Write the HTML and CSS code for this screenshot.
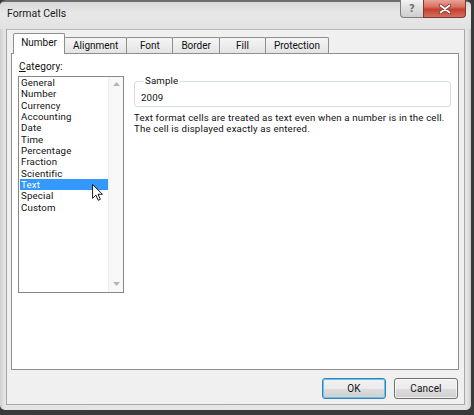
FILE: index.html
```html
<!DOCTYPE html>
<html>
<head>
<meta charset="utf-8">
<title>Format Cells</title>
<link rel="stylesheet" href="styles.css">
</head>
<body>
<div class="window">
  <div class="titlebar">
    <span class="title">Format Cells</span>
    <div class="caption-btns">
      <div class="cap-btn help">?</div>
      <div class="cap-btn close">
        <svg width="14" height="10" viewBox="0 0 14 10"><path d="M2.5 1.5 L11.5 8.5 M11.5 1.5 L2.5 8.5" stroke="#6a2d26" stroke-width="3.4" stroke-linecap="round"/><path d="M2.5 1.5 L11.5 8.5 M11.5 1.5 L2.5 8.5" stroke="#ffffff" stroke-width="1.9" stroke-linecap="round"/></svg>
      </div>
    </div>
  </div>
  <div class="client">
    <div class="tabs">
      <div class="tab selected">Number</div>
      <div class="tab">Alignment</div>
      <div class="tab">Font</div>
      <div class="tab">Border</div>
      <div class="tab">Fill</div>
      <div class="tab">Protection</div>
    </div>
    <div class="panel">
      <div class="col-left">
        <div class="cat-label"><u>C</u>ategory:</div>
        <div class="listbox">
          <ul class="items">
            <li>General</li>
            <li>Number</li>
            <li>Currency</li>
            <li>Accounting</li>
            <li>Date</li>
            <li>Time</li>
            <li>Percentage</li>
            <li>Fraction</li>
            <li>Scientific</li>
            <li class="sel">Text</li>
            <li>Special</li>
            <li>Custom</li>
          </ul>
          <div class="scrollbar">
            <svg width="7" height="4" viewBox="0 0 7 4"><path d="M0 4 L3.5 0 L7 4 Z" fill="#b4b4b4"/></svg>
            <svg width="7" height="4" viewBox="0 0 7 4"><path d="M0 0 L3.5 4 L7 0 Z" fill="#b4b4b4"/></svg>
          </div>
        </div>
      </div>
      <div class="col-right">
        <fieldset class="sample">
          <legend>Sample</legend>
          <div class="sample-value">2009</div>
        </fieldset>
        <p class="desc">Text format cells are treated as text even when a number is in the cell.<br>The cell is displayed exactly as entered.</p>
      </div>
    </div>
    <div class="buttons">
      <div class="btn default">OK</div>
      <div class="btn">Cancel</div>
    </div>
  </div>
</div>
<svg class="cursor" width="11" height="17" viewBox="0 0 12 19"><path d="M0.5 0.5 L0.5 16 L4.2 12.4 L6.8 18.2 L9.2 17.2 L6.6 11.5 L11.5 11.5 Z" fill="#ffffff" stroke="#000000" stroke-width="1" stroke-linejoin="miter"/></svg>
</body>
</html>
```

FILE: styles.css
```css
* { box-sizing: border-box; }
html, body { margin: 0; padding: 0; }
body {
  width: 474px;
  height: 415px;
  background: #3a3a3a;
  font-family: Roboto, "Noto Sans", sans-serif;
  font-size: 9.7px;
  letter-spacing: 0.15px;
  color: #111111;
  position: relative;
  overflow: hidden;
}
.window {
  width: 471px;
  height: 410px;
  background: linear-gradient(90deg, #cfcfcf 0px, #e4e4e4 4px, #e6e6e6 50%, #e4e4e4 calc(100% - 4px), #cdcdcd 100%);
  border-radius: 6px 6px 5px 5px;
  border-top: 2px solid #6e6e6e;
  display: flex;
  flex-direction: column;
}
.titlebar {
  height: 27px;
  display: flex;
  justify-content: space-between;
  align-items: flex-start;
  background: linear-gradient(180deg, #d8d8d8 0%, #e8e8e8 40%, #e2e2e2 100%);
  border-radius: 4px 4px 0 0;
}
.title {
  padding: 6px 0 0 7px;
  font-size: 10.5px;
  letter-spacing: 0;
  line-height: 12px;
  color: #1a1a1a;
}
.caption-btns {
  display: flex;
  margin-right: 5px;
  margin-top: -2px;
}
.cap-btn {
  height: 18px;
  display: flex;
  align-items: center;
  justify-content: center;
  border: 1px solid #7d7d7d;
  border-top: none;
}
.help {
  width: 23px;
  border-radius: 0 0 0 4px;
  border-right: none;
  background: linear-gradient(180deg, #f2f2f2 0%, #dedede 50%, #cfcfcf 100%);
  color: #707070;
  font-family: "DejaVu Sans", sans-serif;
  font-size: 10px;
  font-weight: bold;
  line-height: 12px;
}
.close {
  width: 43px;
  border-radius: 0 0 4px 0;
  border-color: #7a3a33;
  background: linear-gradient(180deg, #e8a396 0%, #d9705f 40%, #c6402f 55%, #d2705c 100%);
}
.client {
  margin: 0 6px;
  height: 376px;
  background: #f0f0f0;
  border: 1px solid #a8a8a8;
  border-top-color: #b8b8b8;
  display: flex;
  flex-direction: column;
}
.tabs {
  display: flex;
  align-items: flex-end;
  height: 23px;
  padding-left: 6px;
  position: relative;
  z-index: 1;
  font-size: 10px;
  letter-spacing: 0;
}
.tab {
  height: 16px;
  min-width: 47px;
  padding: 0 8px;
  margin-left: -1px;
  display: flex;
  align-items: center;
  justify-content: center;
  border: 1px solid #8e8f8f;
  border-bottom: none;
  border-radius: 2px 2px 0 0;
  background: linear-gradient(180deg, #f5f5f5 0%, #ededed 50%, #e3e3e3 100%);
  line-height: 12px;
}
.tab:first-child { margin-left: 0; }
.tab.selected {
  height: 21px;
  margin-bottom: -1px;
  background: #ffffff;
  padding-bottom: 2px;
  width: 52px;
}
.panel {
  margin: 0 5px 0 4px;
  height: 317px;
  background: #ffffff;
  border: 1px solid #8e8f8f;
  display: flex;
  padding: 0 7px 0 6px;
  gap: 10px;
}
.col-left {
  padding-top: 7px;
  display: flex;
  flex-direction: column;
}
.cat-label {
  height: 12px;
  line-height: 12px;
  margin-bottom: 3px;
  padding-left: 1px;
  font-size: 10px;
}
.cat-label u { text-decoration: underline; text-underline-offset: 1px; }
.listbox {
  width: 106px;
  height: 217px;
  border: 1px solid #828790;
  display: flex;
}
.items {
  list-style: none;
  margin: 0;
  padding: 0 0 0 1px;
  width: 89px;
}
.items li {
  height: 11.33px;
  line-height: 11.33px;
  padding-left: 1px;
  white-space: nowrap;
}
.items li.sel {
  background: #3399ff;
  color: #ffffff;
}
.scrollbar {
  width: 15px;
  background: #f8f8f8;
  border-left: 1px solid #ececec;
  display: flex;
  flex-direction: column;
  justify-content: space-between;
  align-items: center;
  padding: 5px 0 6px 1px;
}
.col-right {
  flex: 1;
  min-width: 0;
  padding-top: 21px;
}
.sample {
  margin: 0;
  border: 1px solid #d5dfe5;
  border-radius: 3px;
  padding: 5px 6px 0 6px;
  height: 32px;
}
.sample legend {
  padding: 0 2px;
  margin-left: 2px;
  line-height: 12px;
}
.sample-value {
  line-height: 12px;
}
.desc {
  margin: 5px 0 0 0;
  line-height: 11.33px;
  white-space: nowrap;
}
.buttons {
  display: flex;
  justify-content: flex-end;
  gap: 8px;
  margin-top: 8px;
  padding-right: 6px;
  font-size: 10px;
}
.btn {
  width: 64px;
  height: 21px;
  display: flex;
  align-items: center;
  justify-content: center;
  border: 1px solid #707070;
  border-radius: 3px;
  background: linear-gradient(180deg, #f2f2f2 0%, #ebebeb 50%, #dddddd 51%, #cfcfcf 100%);
  box-shadow: inset 0 0 0 1px rgba(255,255,255,0.7);
}
.btn.default {
  border-color: #3c7fb1;
  box-shadow: inset 0 0 0 1px #5fc6ef;
}
.cursor {
  position: absolute;
  left: 92px;
  top: 184px;
}
```
